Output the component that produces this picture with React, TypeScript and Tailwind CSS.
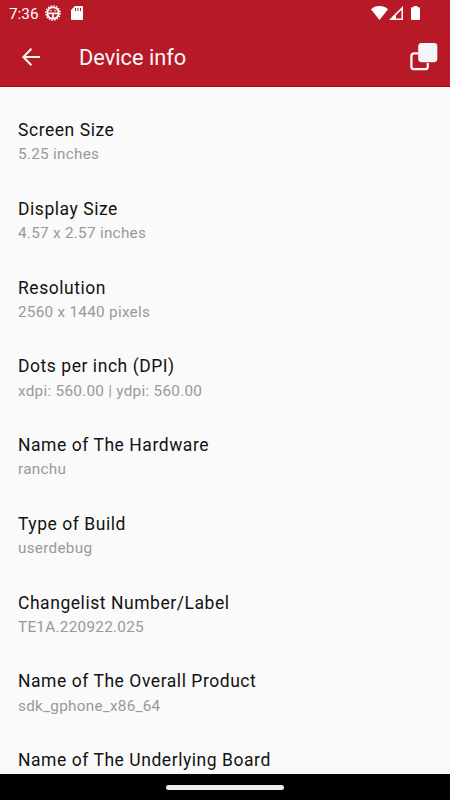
import React from 'react';

const items = [
  { title: 'Screen Size', value: '5.25 inches' },
  { title: 'Display Size', value: '4.57 x 2.57 inches' },
  { title: 'Resolution', value: '2560 x 1440 pixels' },
  { title: 'Dots per inch (DPI)', value: 'xdpi: 560.00 | ydpi: 560.00' },
  { title: 'Name of The Hardware', value: 'ranchu' },
  { title: 'Type of Build', value: 'userdebug' },
  { title: 'Changelist Number/Label', value: 'TE1A.220922.025' },
  { title: 'Name of The Overall Product', value: 'sdk_gphone_x86_64' },
  { title: 'Name of The Underlying Board' },
];

const StatusBar = () => (
  <div className="flex h-[27px] shrink-0 items-center text-white">
    <span className="ml-[9px] w-[36px] pt-[1px] text-[15.3px] leading-[27px] whitespace-nowrap">7:36</span>
    <svg className="-mt-[1px] h-[16px] w-[16px]" viewBox="0 0 16 16" fill="none" stroke="white">
      <circle cx="8" cy="8" r="5.7" strokeWidth="1.7" />
      <circle cx="8" cy="8" r="7.1" strokeWidth="1.5" strokeDasharray="1.6 1.19" />
      <path d="M2.5 8.3h11M8 8.3v5" strokeWidth="1.7" />
      <path d="M4.8 5.8h2M9.2 5.8h2" strokeWidth="1.1" />
    </svg>
    <svg className="-mt-[1px] ml-[10px] h-[14px] w-[12px]" viewBox="0 0 12 14">
      <path d="M4 0h7a1 1 0 0 1 1 1v12a1 1 0 0 1-1 1H1a1 1 0 0 1-1-1V4z" fill="white" />
      <path d="M4.5 2v3M7 2v3M9.5 2v3" stroke="#b71927" strokeWidth="1" />
    </svg>
    <div className="-mt-[1px] mr-[30px] ml-auto flex items-center">
      <svg className="h-[14px] w-[17px]" viewBox="0 0 17 14">
        <path d="M8.5 14 0 3.3C2.4 1.1 5.2 0 8.5 0S14.6 1.1 17 3.3z" fill="white" />
      </svg>
      <svg className="ml-[1px] h-[14px] w-[14px]" viewBox="0 0 14 14">
        <path d="M14 0v14H0zM12.5 3.8 7 9.3v3.3h5.5z" fill="white" fillRule="evenodd" />
      </svg>
      <svg className="ml-[8px] h-[14px] w-[9px]" viewBox="0 0 9 14">
        <path d="M2.6 0h3.8v1.3H8a1 1 0 0 1 1 1V13a1 1 0 0 1-1 1H1a1 1 0 0 1-1-1V2.3a1 1 0 0 1 1-1h1.6z" fill="white" />
      </svg>
    </div>
  </div>
);

const Header = () => (
  <div className="flex h-[60px] items-center border-b border-[#b30009]">
    <button className="ml-[22px]" aria-label="Back">
      <svg className="h-[18px] w-[18px]" viewBox="0 0 18 18" fill="none" stroke="#f7f7f7" strokeWidth="2">
        <path d="M18 9H1.6M9.4 .8 1.4 9l8 8.2" />
      </svg>
    </button>
    <h1 className="ml-[39px] pt-[2px] text-[21.8px] leading-[28px] text-[#f7f7f7]">Device info</h1>
    <button className="mr-[12px] ml-auto" aria-label="Copy">
      <svg className="h-[28px] w-[28px]" viewBox="0 0 28 28">
        <path d="M8 10.4H4.2a2.8 2.8 0 0 0-2.8 2.8v10.2a2.8 2.8 0 0 0 2.8 2.8h10.8a2.8 2.8 0 0 0 2.8-2.8V20" fill="none" stroke="#f7f7f7" strokeWidth="2.3" />
        <rect x="8.2" y="0.1" width="19.1" height="19.1" rx="3.4" fill="#f4f5f9" />
      </svg>
    </button>
  </div>
);

const App = () => {
  return (
    <div className="flex h-screen w-full flex-col overflow-hidden bg-[#fafafa] font-[Roboto,sans-serif]">
      <div className="shrink-0 bg-[#b71927]">
        <StatusBar />
        <Header />
      </div>
      <ul className="min-h-0 flex-1 overflow-hidden pt-[31.1px] pl-[18px]">
        {items.map((item) => (
          <li key={item.title} className="h-[78.75px]">
            <p className="text-[17.5px] leading-[24px] tracking-[0.547px] text-[#121212]">{item.title}</p>
            {item.value && (
              <p className="mt-[2.4px] text-[15.3px] leading-[21px] tracking-[0.273px] text-[#999999]">{item.value}</p>
            )}
          </li>
        ))}
      </ul>
      <div className="flex h-[26px] shrink-0 items-center justify-center bg-black">
        <div className="h-[5px] w-[118px] rounded-full bg-[#ececec]" />
      </div>
    </div>
  );
};

export default App;
